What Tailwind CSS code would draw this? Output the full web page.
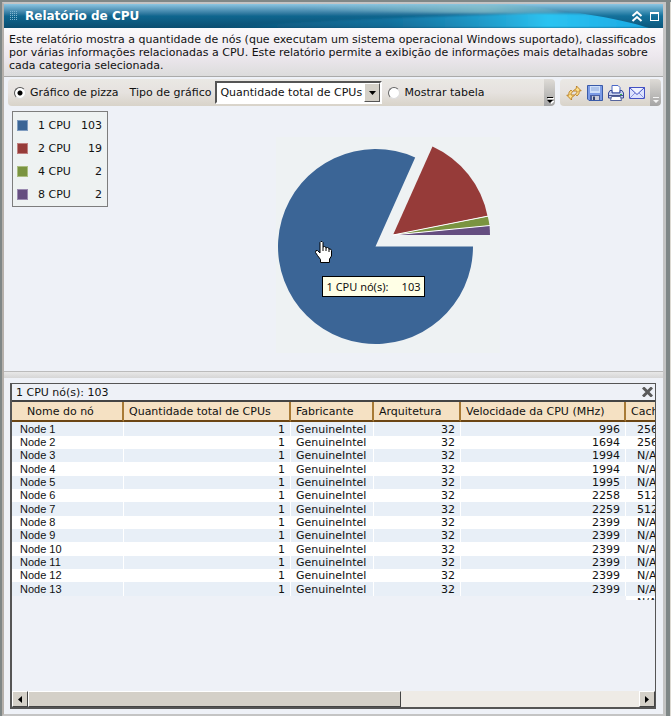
<!DOCTYPE html>
<html lang="pt-BR">
<head>
<meta charset="utf-8">
<title>Relatório de CPU</title>
<script src="https://cdn.jsdelivr.net/npm/@tailwindcss/browser@4"></script>
</head>
<body class="flex min-h-screen bg-[#7f8787] pt-[2px] font-['DejaVu_Sans',sans-serif] text-[11px] leading-[13px] text-[#111]">
<main class="ml-[2px] flex min-w-0 flex-1 flex-col border-2 border-r-[3px] border-[#c4c4c4] border-l-[#b5b0ab] bg-[#eef1f7]">
  <header class="relative flex h-[24px] items-center gap-[7px] bg-linear-to-b from-[#8cc6e2] via-[#0f668f] via-50% to-[#0b4d70] pr-[4px] pl-[6px]">
    <svg class="absolute inset-0 h-full w-full" viewBox="0 0 659 24" preserveAspectRatio="none" aria-hidden="true">
      <defs>
        <linearGradient id="sky" x1="0" x2="1" y1="0" y2="0"><stop offset="0" stop-color="#1c93c9" stop-opacity="0"/><stop offset=".4" stop-color="#1c93c9" stop-opacity=".4"/><stop offset=".75" stop-color="#2cc4f2"/><stop offset="1" stop-color="#17a4e0"/></linearGradient>
        <linearGradient id="sheen" x1="0" x2="1" y1="0" y2="0"><stop offset="0" stop-color="#8fc8cf" stop-opacity="0"/><stop offset=".7" stop-color="#8cc6cc" stop-opacity=".65"/><stop offset="1" stop-color="#5ab0c8" stop-opacity=".5"/></linearGradient>
        <linearGradient id="deep" x1="0" x2="0" y1="0" y2="1"><stop offset="0" stop-color="#8cc6e2"/><stop offset=".5" stop-color="#14719b"/><stop offset="1" stop-color="#0b567b"/></linearGradient>
        <filter id="soft" x="-5%" y="-20%" width="110%" height="140%"><feGaussianBlur stdDeviation="3 1"/></filter>
      </defs>
      <path d="M200 24C320 16 440 12 530 9L620 10L659 24Z" fill="url(#sky)" filter="url(#soft)"/>
      <path d="M300 1H530L560 9C500 10 420 9 300 6Z" fill="url(#sheen)" filter="url(#soft)"/>
      <path d="M505 0C555 5 615 14 645 24H659V0Z" fill="url(#deep)"/>
    </svg>
    <svg class="relative h-[10px] w-[8px]" viewBox="0 0 8 10" fill="#7fb6d2" shape-rendering="crispEdges" aria-hidden="true"><path d="M0 0h1v1H0zM2 0h1v1H2zM4 0h1v1H4zM6 0h1v1H6zM0 2h1v1H0zM2 2h1v1H2zM4 2h1v1H4zM6 2h1v1H6zM0 4h1v1H0zM2 4h1v1H2zM4 4h1v1H4zM6 4h1v1H6zM0 6h1v1H0zM2 6h1v1H2zM4 6h1v1H4zM6 6h1v1H6zM0 8h1v1H0zM2 8h1v1H2zM4 8h1v1H4zM6 8h1v1H6z"/></svg>
    <h1 class="relative flex-1 text-[12px] leading-[16px] font-bold text-white">Relatório de CPU</h1>
    <button class="relative" aria-label="Recolher"><svg class="h-[12px] w-[12px]" viewBox="0 0 12 12" fill="none" stroke="#fff" stroke-width="2"><path d="M1.500 6L6 2L10.500 6M1.500 11L6 7L10.500 11"/></svg></button>
    <button class="relative h-[9px] w-[9px] border border-t-2 border-white" aria-label="Maximizar"></button>
  </header>

  <p class="h-[49px] border-b border-[#aaa] bg-linear-to-b from-[#fbfafc] via-[#ece7ed] via-60% to-[#dcdcdc] px-[5px] py-[5px]">Este relatório mostra a quantidade de nós (que executam um sistema operacional Windows suportado), classificados por várias informações relacionadas a CPU. Este relatório permite a exibição de informações mais detalhadas sobre cada categoria selecionada.</p>

  <div class="mt-[2px] flex h-[27px] gap-[5px] pr-[2px] pl-[4px]">
    <form class="flex flex-1 items-center overflow-hidden rounded-[4px] bg-linear-to-b from-[#eae8e4] via-[#e6e2df] to-[#d8d3c9] pl-[6px]">
      <input id="pie" name="view" type="radio" checked class="h-[12px] w-[12px] appearance-none rounded-full border border-t-[#555] border-r-[#ddd] border-b-[#ddd] border-l-[#555] bg-[radial-gradient(circle,#000_2px,#fff_3px)]">
      <label for="pie" class="ml-[4px] whitespace-nowrap">Gráfico de pizza</label>
      <label for="kind" class="ml-[11px] whitespace-nowrap">Tipo de gráfico</label>
      <span class="relative ml-[4px] flex h-[23px] w-[167px] border-2 border-t-[#555] border-r-white border-b-white border-l-[#555] bg-white">
        <select id="kind" class="w-full appearance-none bg-transparent pl-[3px] text-[11px] leading-[13px] whitespace-nowrap"><option>Quantidade total de CPUs</option></select>
        <span class="pointer-events-none absolute inset-y-0 right-0 flex w-[16px] items-center justify-center border border-t-white border-r-[#555] border-b-[#555] border-l-white bg-[#d4d0c8]"><svg class="h-[4px] w-[7px]" viewBox="0 0 7 4"><path d="M0 0h7L3.500 4z"/></svg></span>
      </span>
      <input id="tab" name="view" type="radio" class="ml-[6px] h-[12px] w-[12px] appearance-none rounded-full border border-t-[#666] border-r-[#ddd] border-b-[#ddd] border-l-[#666] bg-white">
      <label for="tab" class="ml-[4px] whitespace-nowrap">Mostrar tabela</label>
      <button type="button" aria-label="Mais opções" class="ml-auto flex h-full w-[11px] items-end justify-center rounded-r-[4px] bg-linear-to-b from-[#dedbd6] to-[#a5a5a5] pb-[2px]"><svg class="h-[8px] w-[8px]" viewBox="0 0 8 8"><path d="M2 2h6v1H2zM3 5h6L5.500 8z" fill="#fff"/><path d="M1 1h6v1H1zM1 4h6L4 7z"/></svg></button>
    </form>
    <div class="flex items-center gap-[5px] overflow-hidden rounded-[4px] bg-linear-to-b from-[#eae8e4] via-[#e6e2df] to-[#d8d3c9] pl-[6px]">
      <button aria-label="Atualizar"><svg class="h-[16px] w-[16px]" viewBox="0 0 16 16"><g fill="#fde08c" stroke="#b8791a" stroke-width=".9" stroke-linejoin="round"><path d="M10.500 1L15.200 5.800L13 5.900C13.600 8 12.700 9.700 11 10.800L9.300 9.300C10.700 8.500 11.300 7.200 10.900 6H7.200L8.500 4.800C9.700 4.500 10.500 4 10.500 1Z"/><path d="M5.500 15L.8 10.200L3 10.100C2.400 8 3.300 6.300 5 5.200L6.700 6.700C5.300 7.500 4.700 8.800 5.100 10H8.800L7.500 11.200C6.300 11.500 5.500 12 5.500 15Z"/></g></svg></button>
      <button aria-label="Salvar"><svg class="h-[16px] w-[16px]" viewBox="0 0 16 16"><path d="M.5.5h15v15H2L.5 14z" fill="#7b9be6" stroke="#3a5ba8"/><path d="M3 1h10v7H3z" fill="#cfe0fa"/><path d="M4 3h8M4 5h8" stroke="#8fa9dc"/><path d="M3 10h10v5H3z" fill="#4a60a0"/><path d="M5 11h7v4H5z" fill="#c9ccd8"/><path d="M6 11.500h2V15H6z" fill="#34436f"/></svg></button>
      <button aria-label="Imprimir"><svg class="h-[16px] w-[16px]" viewBox="0 0 16 16"><path d="M4 .5h6l2 2V8H4z" fill="#fff" stroke="#4a68c8"/><path d="M2 5.500h2V8h8V5.500h2L15.500 8v5h-15V8z" fill="#c6d0ee" stroke="#374894"/><path d="M1 10.500h14" stroke="#47528c"/><path d="M3.500 11.500h9l1 4h-11z" fill="#fff" stroke="#55649c"/><path d="M12 9h2v1h-2z" fill="#35b34a"/></svg></button>
      <button aria-label="Enviar por e-mail"><svg class="h-[16px] w-[16px]" viewBox="0 0 16 16" fill="#dce2fd" stroke="#4351c4"><path d="M.5 2.500h15v11H.5z"/><path d="M.5 13.500L6 8M15.500 13.500L10 8" fill="none" stroke="#8a94e0"/><path d="M.5 2.500L8 9.500L15.500 2.500z" fill="#eff2ff"/></svg></button>
      <button aria-label="Mais ações" class="flex h-full w-[11px] items-end justify-center rounded-r-[4px] bg-linear-to-b from-[#dedbd6] to-[#a5a5a5] pb-[2px]"><svg class="h-[8px] w-[8px]" viewBox="0 0 8 8"><path d="M1 1h6v1H1zM1 4h6L4 7z" fill="#f4f4f4"/></svg></button>
    </div>
  </div>

  <section class="flex h-[265px] items-start pt-[5px] pl-[8px]">
    <ul class="flex h-[96px] w-[96px] shrink-0 flex-col justify-between border border-[#7d7d7d] bg-[#eef2f2] pt-[7px] pr-[5px] pb-[5px] pl-[4px]">
      <li class="flex items-center"><span class="mr-[10px] h-[11px] w-[11px] border border-[#7f9cc0] bg-[#3b6596]"></span>1 CPU<span class="ml-auto">103</span></li>
      <li class="flex items-center"><span class="mr-[10px] h-[11px] w-[11px] border border-[#bf8080] bg-[#963b39]"></span>2 CPU<span class="ml-auto">19</span></li>
      <li class="flex items-center"><span class="mr-[10px] h-[11px] w-[11px] border border-[#abbd82] bg-[#7a9440]"></span>4 CPU<span class="ml-auto">2</span></li>
      <li class="flex items-center"><span class="mr-[10px] h-[11px] w-[11px] border border-[#9a8ab0] bg-[#654e80]"></span>8 CPU<span class="ml-auto">2</span></li>
    </ul>
    <div class="flex flex-1 justify-center pt-[26px] pl-[4px]">
      <div class="relative h-[216px] w-[224px] bg-[#eef2f3]">
        <svg class="h-[216px] w-[224px]" viewBox="276 137 224 216" role="img" aria-label="Gráfico de pizza por quantidade de CPUs">
          <path d="M375.500 246.500H473A97.500 97.500 0 1 1 415.200 157.500Z" fill="#3b6596"/>
          <path d="M393 235L432.500 146.500A97 97 0 0 1 487.500 216Z" fill="#963b39"/>
          <path d="M393 235L487.800 216.500A97 97 0 0 1 489.500 225.500Z" fill="#7a9440"/>
          <path d="M393 235L489.500 225.500A97 97 0 0 1 490 235Z" fill="#654e80"/>
          <path d="M393 235L488.500 216M393 235L490 225.500" stroke="#fff"/>
        </svg>
        <svg class="absolute top-[104px] left-[39px] h-[22px] w-[18px]" viewBox="0 0 18 22" fill="#fff" stroke="#000" stroke-linejoin="round"><path d="M5.500 21.500V18.500L2.500 14.500L.5 11.500L1 9.500H2.500L5 12V1.500L6 .5H7L8 1.500V6L9.500 5.500L11 6.500V7L12.500 6.500L14 7.500V8L15.500 8L16.500 9.500V15L14.500 18V21.500Z"/><path d="M8 6v4M11 7v3M14 8v3" fill="none"/></svg>
        <div role="tooltip" class="absolute top-[139px] left-[46px] flex h-[21px] w-[103px] items-center justify-between border border-black bg-[#ffffe6] pr-[3px] pl-[4px] font-['Noto_Sans',sans-serif] whitespace-nowrap"><span>1 CPU nó(s):</span><span>103</span></div>
      </div>
    </div>
  </section>

  <div class="h-[7px] border-t border-[#bbb] bg-linear-to-b from-[#e8e8e8] to-[#d6d6d6]"></div>

  <section class="mx-[6px] mt-[5px] mr-[7px] mb-[5px] flex flex-1 flex-col overflow-hidden border-2 border-t border-r border-[#555]">
    <div class="flex h-[18px] items-center justify-between border-b-2 border-[#444] pr-[2px] pl-[4px]">
      <h2>1 CPU nó(s): 103</h2>
      <button aria-label="Fechar"><svg class="h-[10px] w-[11px]" viewBox="0 0 11 10" stroke="#5a5a5a" stroke-width="3"><path d="M1 .5L10 9.500M10 .5L1 9.500"/></svg></button>
    </div>
    <div class="flex-1 overflow-hidden">
      <table class="w-[694px] table-fixed border-separate border-spacing-0 whitespace-nowrap [&_td]:overflow-hidden [&_td]:border-r [&_td]:border-white [&_td]:p-0 [&_td]:pr-[5px] [&_td]:text-right [&_td:first-child]:pl-[8px] [&_td:first-child]:text-left [&_td:first-child]:font-['Liberation_Sans',Arial,sans-serif] [&_td:nth-child(3)]:pl-[5px] [&_td:nth-child(3)]:text-left [&_td:nth-child(6)]:pl-[11px] [&_td:nth-child(6)]:text-left [&_th]:h-[20px] [&_th]:border-r-2 [&_th]:border-b-2 [&_th]:border-r-[#a87a35] [&_th]:border-b-[#6b4513] [&_th]:bg-[#f5e1c3] [&_th]:p-0 [&_th]:pl-[5px] [&_th]:text-left [&_th]:font-normal">
        <colgroup><col class="w-[112px]"><col class="w-[167px]"><col class="w-[83px]"><col class="w-[87px]"><col class="w-[165px]"><col class="w-[80px]"></colgroup>
        <thead><tr><th><span class="pl-[10px]">Nome do nó</span></th><th>Quantidade total de CPUs</th><th>Fabricante</th><th>Arquitetura</th><th>Velocidade da CPU (MHz)</th><th>Cache</th></tr></thead>
        <tbody class="[&>tr]:h-[13px] [&>tr:nth-child(3n+1)]:h-[14px] [&>tr:nth-child(even)]:bg-white [&>tr:nth-child(odd)]:bg-[#e8eff7]">
          <tr><td>Node 1</td><td>1</td><td>GenuineIntel</td><td>32</td><td>996</td><td>256</td></tr>
          <tr><td>Node 2</td><td>1</td><td>GenuineIntel</td><td>32</td><td>1694</td><td>256</td></tr>
          <tr><td>Node 3</td><td>1</td><td>GenuineIntel</td><td>32</td><td>1994</td><td>N/A</td></tr>
          <tr><td>Node 4</td><td>1</td><td>GenuineIntel</td><td>32</td><td>1994</td><td>N/A</td></tr>
          <tr><td>Node 5</td><td>1</td><td>GenuineIntel</td><td>32</td><td>1995</td><td>N/A</td></tr>
          <tr><td>Node 6</td><td>1</td><td>GenuineIntel</td><td>32</td><td>2258</td><td>512</td></tr>
          <tr><td>Node 7</td><td>1</td><td>GenuineIntel</td><td>32</td><td>2259</td><td>512</td></tr>
          <tr><td>Node 8</td><td>1</td><td>GenuineIntel</td><td>32</td><td>2399</td><td>N/A</td></tr>
          <tr><td>Node 9</td><td>1</td><td>GenuineIntel</td><td>32</td><td>2399</td><td>N/A</td></tr>
          <tr><td>Node 10</td><td>1</td><td>GenuineIntel</td><td>32</td><td>2399</td><td>N/A</td></tr>
          <tr><td>Node 11</td><td>1</td><td>GenuineIntel</td><td>32</td><td>2399</td><td>N/A</td></tr>
          <tr><td>Node 12</td><td>1</td><td>GenuineIntel</td><td>32</td><td>2399</td><td>N/A</td></tr>
          <tr><td>Node 13</td><td>1</td><td>GenuineIntel</td><td>32</td><td>2399</td><td>N/A</td></tr>
        </tbody>
      </table>
      <div class="ml-[614px] h-[4px] overflow-hidden bg-white pl-[11px]">N/A</div>
    </div>
    <div class="flex h-[16px] bg-[#eeebe6]">
      <button aria-label="Rolar para a esquerda" class="flex w-[16px] items-center justify-center border border-t-white border-r-[#444] border-b-[#444] border-l-white bg-[#d4d0c8]"><svg class="h-[7px] w-[4px]" viewBox="0 0 4 7"><path d="M4 0v7L0 3.500z"/></svg></button>
      <div class="w-[58%] border border-t-white border-r-[#444] border-b-[#444] border-l-white bg-[#d4d0c8]"></div>
      <button aria-label="Rolar para a direita" class="ml-auto flex w-[16px] items-center justify-center border border-t-white border-r-[#444] border-b-[#444] border-l-white bg-[#d4d0c8]"><svg class="h-[7px] w-[4px]" viewBox="0 0 4 7"><path d="M0 0v7L4 3.500z"/></svg></button>
    </div>
  </section>
</main>
<div class="w-[5px] border-r border-[#dcd9d2]"></div>
</body>
</html>
